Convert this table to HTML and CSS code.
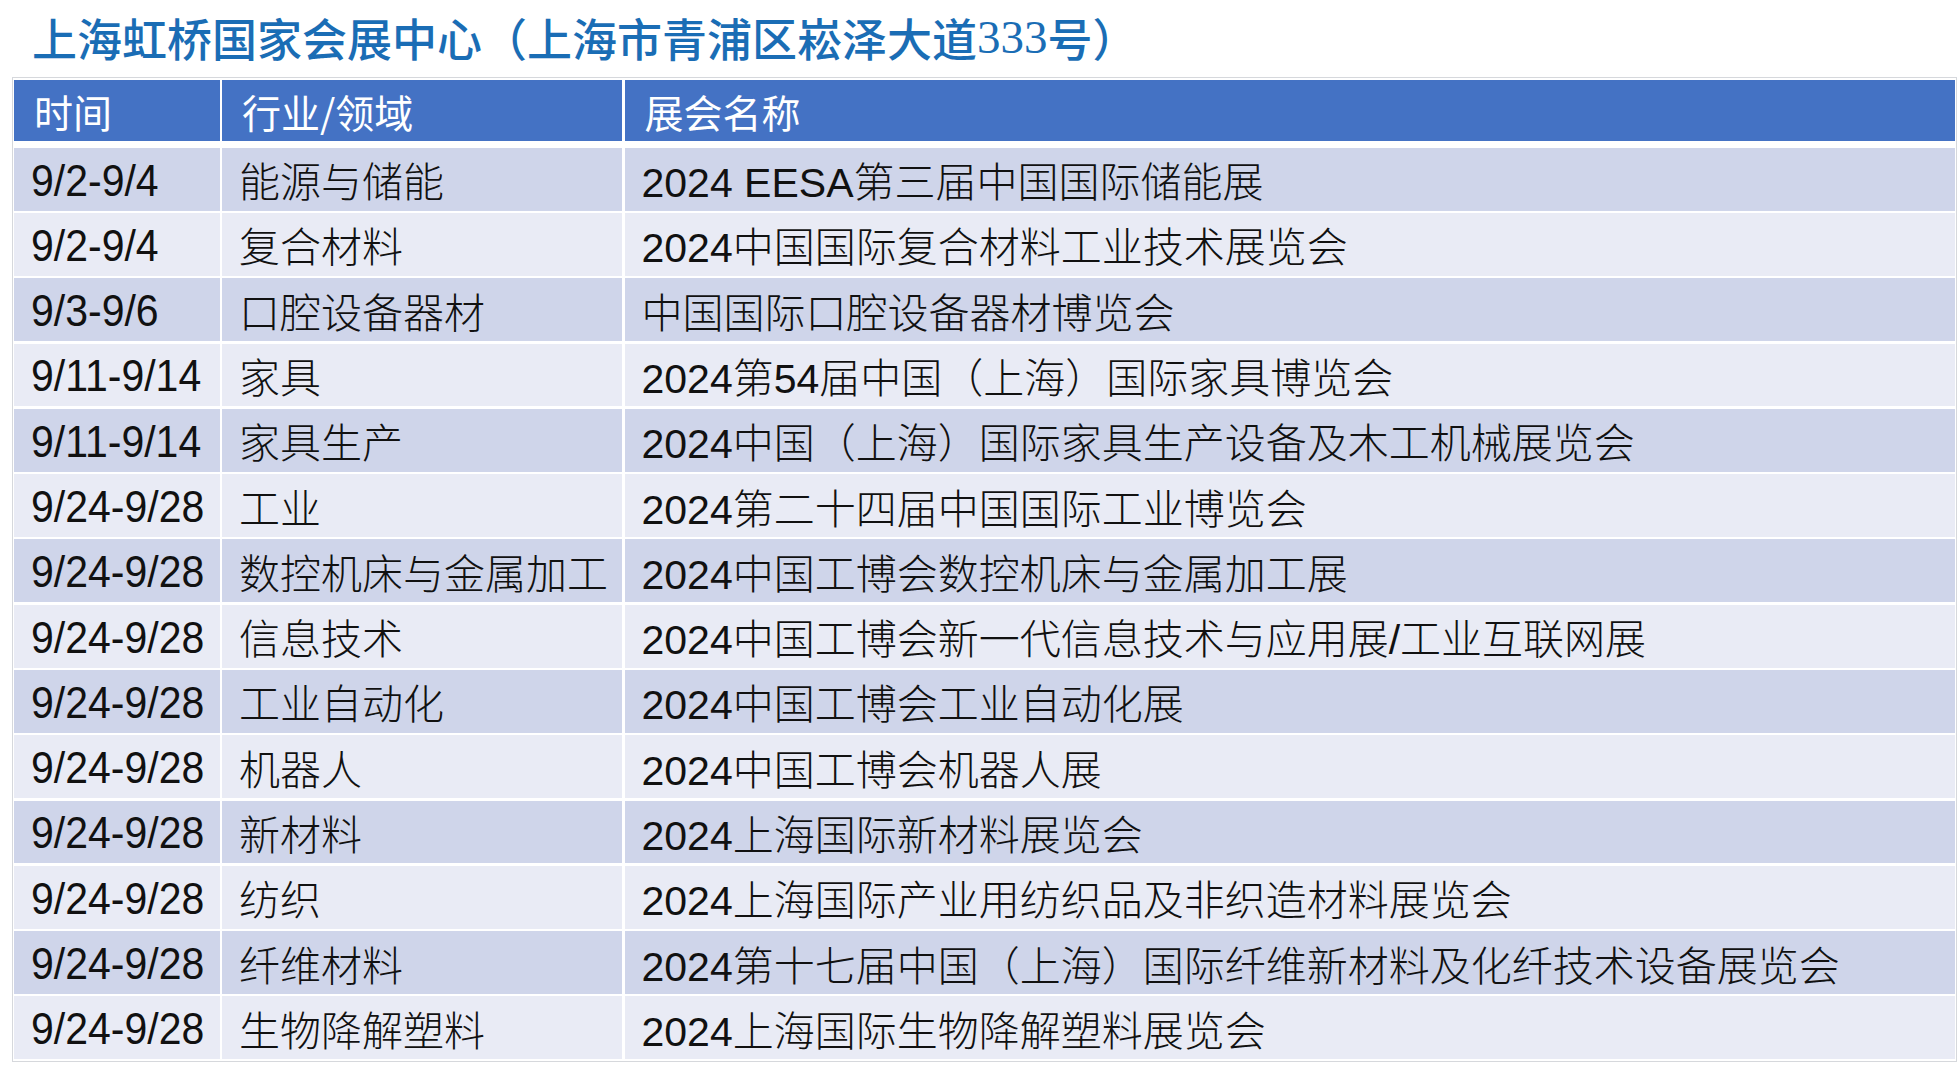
FILE: index.html
```html
<!DOCTYPE html>
<html lang="zh-CN">
<head>
<meta charset="utf-8">
<title>上海虹桥国家会展中心</title>
<link rel="stylesheet" href="styles.css">
</head>
<body>
<div class="page">
  <h1 class="title">上海虹桥国家会展中心（上海市青浦区崧泽大道<span class="num">333</span>号）</h1>
  <div class="table">
    <div class="thead">
      <div class="th">时间</div>
      <div class="th">行业/领域</div>
      <div class="th">展会名称</div>
    </div>
    <div class="tbody">
      <div class="row odd"><div class="td"><span class="d">9/2-9/4</span></div><div class="td">能源与储能</div><div class="td">2024 EESA第三届中国国际储能展</div></div>
      <div class="row even"><div class="td"><span class="d">9/2-9/4</span></div><div class="td">复合材料</div><div class="td">2024中国国际复合材料工业技术展览会</div></div>
      <div class="row odd"><div class="td"><span class="d">9/3-9/6</span></div><div class="td">口腔设备器材</div><div class="td">中国国际口腔设备器材博览会</div></div>
      <div class="row even"><div class="td"><span class="d">9/11-9/14</span></div><div class="td">家具</div><div class="td">2024第54届中国（上海）国际家具博览会</div></div>
      <div class="row odd"><div class="td"><span class="d">9/11-9/14</span></div><div class="td">家具生产</div><div class="td">2024中国（上海）国际家具生产设备及木工机械展览会</div></div>
      <div class="row even"><div class="td"><span class="d">9/24-9/28</span></div><div class="td">工业</div><div class="td">2024第二十四届中国国际工业博览会</div></div>
      <div class="row odd"><div class="td"><span class="d">9/24-9/28</span></div><div class="td">数控机床与金属加工</div><div class="td">2024中国工博会数控机床与金属加工展</div></div>
      <div class="row even"><div class="td"><span class="d">9/24-9/28</span></div><div class="td">信息技术</div><div class="td">2024中国工博会新一代信息技术与应用展/工业互联网展</div></div>
      <div class="row odd"><div class="td"><span class="d">9/24-9/28</span></div><div class="td">工业自动化</div><div class="td">2024中国工博会工业自动化展</div></div>
      <div class="row even"><div class="td"><span class="d">9/24-9/28</span></div><div class="td">机器人</div><div class="td">2024中国工博会机器人展</div></div>
      <div class="row odd"><div class="td"><span class="d">9/24-9/28</span></div><div class="td">新材料</div><div class="td">2024上海国际新材料展览会</div></div>
      <div class="row even"><div class="td"><span class="d">9/24-9/28</span></div><div class="td">纺织</div><div class="td">2024上海国际产业用纺织品及非织造材料展览会</div></div>
      <div class="row odd"><div class="td"><span class="d">9/24-9/28</span></div><div class="td">纤维材料</div><div class="td">2024第十七届中国（上海）国际纤维新材料及化纤技术设备展览会</div></div>
      <div class="row even"><div class="td"><span class="d">9/24-9/28</span></div><div class="td">生物降解塑料</div><div class="td">2024上海国际生物降解塑料展览会</div></div>
    </div>
  </div>
</div>
</body>
</html>
```

FILE: styles.css
```css
html, body {
  margin: 0;
  padding: 0;
  background: #ffffff;
}

.page {
  width: 1959px;
  height: 1080px;
  overflow: hidden;
  padding: 0 2px 0 12px;
  box-sizing: border-box;
}

.title {
  margin: 0;
  height: 77px;
  padding: 0 0 3px 20px;
  box-sizing: border-box;
  display: flex;
  align-items: center;
  font-family: "Noto Sans CJK SC", sans-serif;
  font-size: 45px;
  font-weight: 500;
  color: #1a6db5;
  white-space: nowrap;
}

.title .num {
  font-family: "Liberation Serif", "Noto Sans CJK SC", serif;
  font-size: 47px;
}

.table {
  border: 1px solid #d6d8dc;
  padding: 2px 1px 2px 1px;
  display: flex;
  flex-direction: column;
  gap: 6.7px;
  font-family: "Liberation Sans", "Noto Sans CJK SC", sans-serif;
  font-size: 41px;
}

.thead,
.row {
  display: grid;
  grid-template-columns: 205.5px 400px 1fr;
  column-gap: 2.5px;
}

.thead {
  height: 61px;
}

.tbody {
  display: flex;
  flex-direction: column;
  gap: 2.4px;
}

.row {
  height: 62.9px;
}

.th,
.td {
  display: flex;
  align-items: center;
  padding-left: 17px;
  white-space: nowrap;
  overflow: hidden;
}

.th {
  background: #4472c4;
  color: #ffffff;
  font-family: "Noto Sans CJK SC", sans-serif;
  font-size: 39px;
  padding-left: 20px;
}

.td {
  color: #111111;
  font-weight: 300;
}

.d {
  display: inline-block;
  transform: translateY(2px) scaleY(1.07);
}

.odd .td {
  background: #cfd5ea;
}

.even .td {
  background: #e9ebf5;
}
```
